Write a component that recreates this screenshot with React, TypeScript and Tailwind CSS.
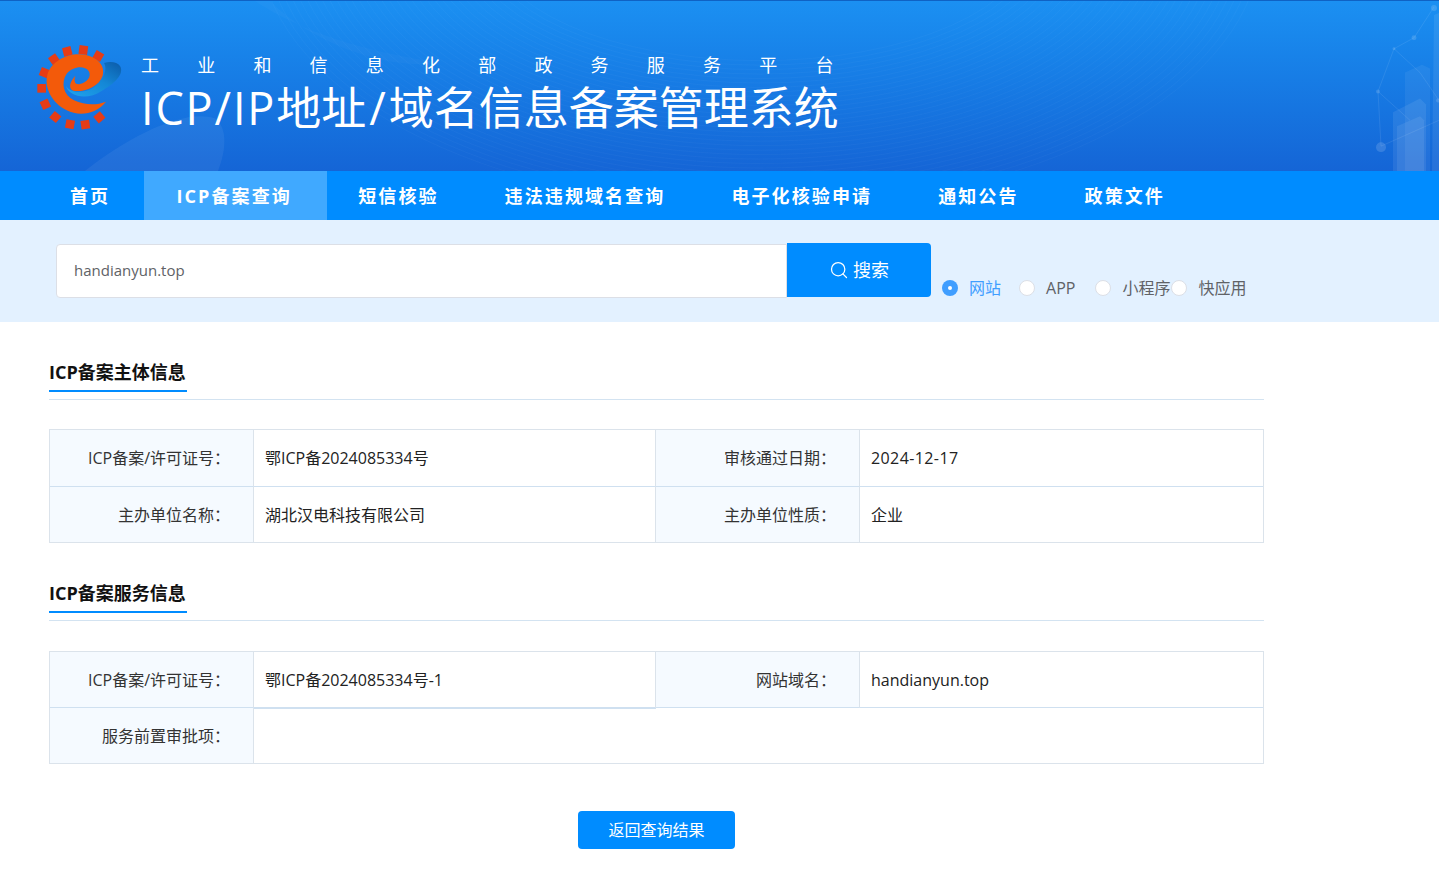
import { Search } from "lucide-react";

const font = "font-['Open_Sans','Noto_Sans_CJK_SC',sans-serif]";

function Logo() {
  const squares: [number, number, number][] = [
    [205, 45, 30], [160, 27, 8], [112, 31, -15], [72, 55, -35], [43, 95, -68], [35, 142, -90],
    [46, 190, -115], [76, 228, -140], [120, 250, -170], [166, 251, 172], [208, 229, 140],
  ];
  return (
    <svg viewBox="0 0 300 285" className="h-[95px] w-[100px] shrink-0">
      <defs>
        <linearGradient id="sw" x1="0" y1="1" x2="1" y2="0">
          <stop offset="0" stopColor="#1fa4ee" />
          <stop offset="0.55" stopColor="#1487d6" />
          <stop offset="1" stopColor="#0b5aa8" />
        </linearGradient>
      </defs>
      {squares.map(([x, y, r]) => (
        <rect key={`${x}-${y}`} x={x - 13} y={y - 13} width="26" height="26" fill="#e63c16" transform={`rotate(${r} ${x} ${y})`} />
      ))}
      <path d="M108 135C115 165 170 180 215 150C250 130 285 100 270 75C262 62 240 60 222 66C234 85 220 120 190 140C165 155 125 160 108 135Z" fill="url(#sw)" />
      <path d="M228 182C200 218 150 228 110 208C66 186 42 140 52 102C63 62 110 38 150 40C192 42 228 68 218 104C208 136 165 152 137 150C116 149 114 128 136 104C130 122 136 132 150 129C172 125 186 105 176 90C163 72 128 76 110 98C92 126 100 162 132 178C165 193 200 193 228 182Z" fill="#f35a0a" />
    </svg>
  );
}

function HeaderDecor() {
  return (
    <svg viewBox="0 0 1439 171" className="pointer-events-none absolute inset-0 h-full w-full" preserveAspectRatio="none">
      <path d="M85 171C130 135 185 108 215 118C228 128 226 150 218 171Z" fill="#ffffff" fillOpacity="0.06" />
      <path d="M255 0C300 30 360 50 440 62C400 70 320 50 270 0Z" fill="#ffffff" fillOpacity="0.025" />
      {Array.from({ length: 34 }, (_, i) => (
        <ellipse key={i} cx="760" cy="-60" rx={270 + i * 7} ry={120 + i * 4.5} fill="none" stroke="#ffffff" strokeOpacity="0.03" />
      ))}
      <g stroke="#ffffff" strokeOpacity="0.09" fill="none">
        <path d="M1381 146L1378 91L1394 48L1414 37L1434 6" />
        <path d="M1378 91L1410 120M1394 48L1420 72L1439 100M1381 146L1439 120" />
      </g>
      <g fill="#ffffff" fillOpacity="0.14">
        <circle cx="1381" cy="147" r="5" />
        <circle cx="1378" cy="91" r="2" />
        <circle cx="1394" cy="48" r="1.5" />
        <circle cx="1414" cy="37" r="2.5" />
        <circle cx="1434" cy="7" r="3" />
        <circle cx="1438" cy="100" r="2" />
      </g>
      <path d="M1405 72L1422 64L1430 68L1430 171L1405 171Z" fill="#ffffff" fillOpacity="0.06" />
      <path d="M1393 112L1420 98L1426 104L1426 171L1393 171Z" fill="#ffffff" fillOpacity="0.08" />
      <path d="M1397 126L1420 116L1424 120L1424 171L1397 171Z" fill="#ffffff" fillOpacity="0.08" />
      <path d="M1434 14L1439 12L1439 171L1432 171Z" fill="#ffffff" fillOpacity="0.08" />
    </svg>
  );
}

function Section({ title, children }: { title: string; children: React.ReactNode }) {
  return (
    <section>
      <div className="border-b border-[#d3e3f1] pb-[7px]">
        <h2 className="w-[138px] border-b-2 border-[#008cff] pb-1 text-[18px] leading-[27px] font-bold whitespace-nowrap text-[#111]">{title}</h2>
      </div>
      {children}
    </section>
  );
}

const labelCls = "flex items-center justify-end bg-[#f5faff] pr-[23px] text-[16px] text-[#333]";
const valueCls = "flex items-center pl-[11px] text-[16px] text-[#222]";

function Table1() {
  return (
    <div className="mt-[29px] grid h-[114px] grid-cols-[204px_402px_204px_1fr] grid-rows-[57px_1fr] border border-[#dbe3eb]">
      <div className={`${labelCls} border-r border-b border-r-[#dbe3eb] border-b-[#cfe0f0]`}>ICP备案/许可证号：</div>
      <div className={`${valueCls} border-r border-b border-r-[#dbe3eb] border-b-[#cfe0f0]`}>鄂ICP备2024085334号</div>
      <div className={`${labelCls} border-r border-b border-r-[#dbe3eb] border-b-[#cfe0f0]`}>审核通过日期：</div>
      <div className={`${valueCls} border-b border-b-[#cfe0f0]`}><span className="tracking-[0.4px]">2024-12-17</span></div>
      <div className={`${labelCls} border-r border-r-[#dbe3eb]`}>主办单位名称：</div>
      <div className={`${valueCls} border-r border-r-[#dbe3eb]`}>湖北汉电科技有限公司</div>
      <div className={`${labelCls} border-r border-r-[#dbe3eb]`}>主办单位性质：</div>
      <div className={valueCls}>企业</div>
    </div>
  );
}

function Table2() {
  return (
    <div className="mt-[30px] grid h-[113px] grid-cols-[204px_402px_204px_1fr] grid-rows-[56px_1fr] border border-[#dbe3eb]">
      <div className={`${labelCls} border-r border-b border-r-[#dbe3eb] border-b-[#cfe0f0]`}>ICP备案/许可证号：</div>
      <div className={`${valueCls} -mb-px border-r border-b-2 border-r-[#dbe3eb] border-b-[#cfe0f0]`}>鄂ICP备2024085334号-1</div>
      <div className={`${labelCls} border-r border-b border-r-[#dbe3eb] border-b-[#cfe0f0]`}>网站域名：</div>
      <div className={`${valueCls} border-b border-b-[#cfe0f0]`}>handianyun.top</div>
      <div className={`${labelCls} border-r border-r-[#dbe3eb] pt-px`}>服务前置审批项：</div>
      <div className="col-span-3" />
    </div>
  );
}

function Radio({ label, active, className }: { label: string; active?: boolean; className: string }) {
  return (
    <div className={`flex items-center ${className}`}>
      {active ? (
        <span className="flex h-4 w-4 items-center justify-center rounded-full bg-[#409eff]">
          <span className="h-1 w-1 rounded-full bg-white" />
        </span>
      ) : (
        <span className="h-4 w-4 rounded-full border border-[#dcdfe6] bg-white" />
      )}
      <span className={`ml-[11px] text-[16px] leading-6 ${active ? "text-[#409eff]" : "text-[#606266]"}`}>{label}</span>
    </div>
  );
}

const navItems = [
  { t: "首页", c: "pl-[33px] pr-[34px]" },
  { t: "ICP备案查询", c: "w-[183px] justify-center pr-[3px] bg-[#40a9ff]" },
  { t: "短信核验", c: "pl-[31px] pr-[33px]" },
  { t: "违法违规域名查询", c: "px-[33px]" },
  { t: "电子化核验申请", c: "px-[33px]" },
  { t: "通知公告", c: "px-[33px]" },
  { t: "政策文件", c: "px-[33px]" },
];

export default function App() {
  return (
    <div className={`${font} min-h-[886px] bg-white`}>
      <header className="relative flex h-[171px] items-start overflow-hidden border-t border-[#0f62c4] bg-gradient-to-b from-[#1b90f2] to-[#1565d6] pl-[30px]">
        <HeaderDecor />
        <div className="relative mt-[40px]">
          <Logo />
        </div>
        <div className="relative ml-[11px] mt-[51px] text-white">
          <div className="text-[18px] leading-[27px] tracking-[38.2px] whitespace-nowrap">工业和信息化部政务服务平台</div>
          <div className="-mt-px text-[45px] leading-[60px] whitespace-nowrap">
            <span className="tracking-[1.85px]">ICP/IP</span>地址<span className="ml-[3px] mr-[3px]">/</span>域名信息备案管理系统
          </div>
        </div>
      </header>

      <nav className="flex h-[49px] bg-[#008cff] pl-[37px]">
        {navItems.map(({ t, c }) => (
          <div key={t} className={`flex items-center pt-px text-[18px] font-bold tracking-[2.1px] text-white ${c}`}>
            {t}
          </div>
        ))}
      </nav>

      <div className="flex h-[102px] bg-[#e3f1ff] pl-[56px] pt-[23px]">
        <div className="mt-px flex h-[54px] w-[731px] items-center rounded-l border border-[#dcdfe6] bg-white pb-[2px] pl-[17px] text-[15px] text-[#606266]">
          handianyun.top
        </div>
        <button className="flex h-[54px] w-[144px] items-center justify-center gap-1 rounded-r bg-[#008cff] text-[18px] text-white">
          <Search size={20} strokeWidth={1.5} />
          搜索
        </button>
        <div className="ml-[11px] flex h-[54px] items-end">
          <div className="flex translate-y-[3px] items-center">
            <Radio label="网站" active className="mr-[18px]" />
            <Radio label="APP" className="mr-[20px]" />
            <Radio label="小程序" className="mr-[1px]" />
            <Radio label="快应用" className="" />
          </div>
        </div>
      </div>

      <main className="w-[1264px] pl-[49px] pt-[37px] pb-[37px]">
        <Section title="ICP备案主体信息">
          <Table1 />
        </Section>
        <div className="mt-[37px]">
          <Section title="ICP备案服务信息">
            <Table2 />
          </Section>
        </div>
        <div className="mt-[47px] flex justify-center">
          <button className="h-[38px] w-[157px] rounded bg-[#008cff] text-[16px] text-white">返回查询结果</button>
        </div>
      </main>
    </div>
  );
}
